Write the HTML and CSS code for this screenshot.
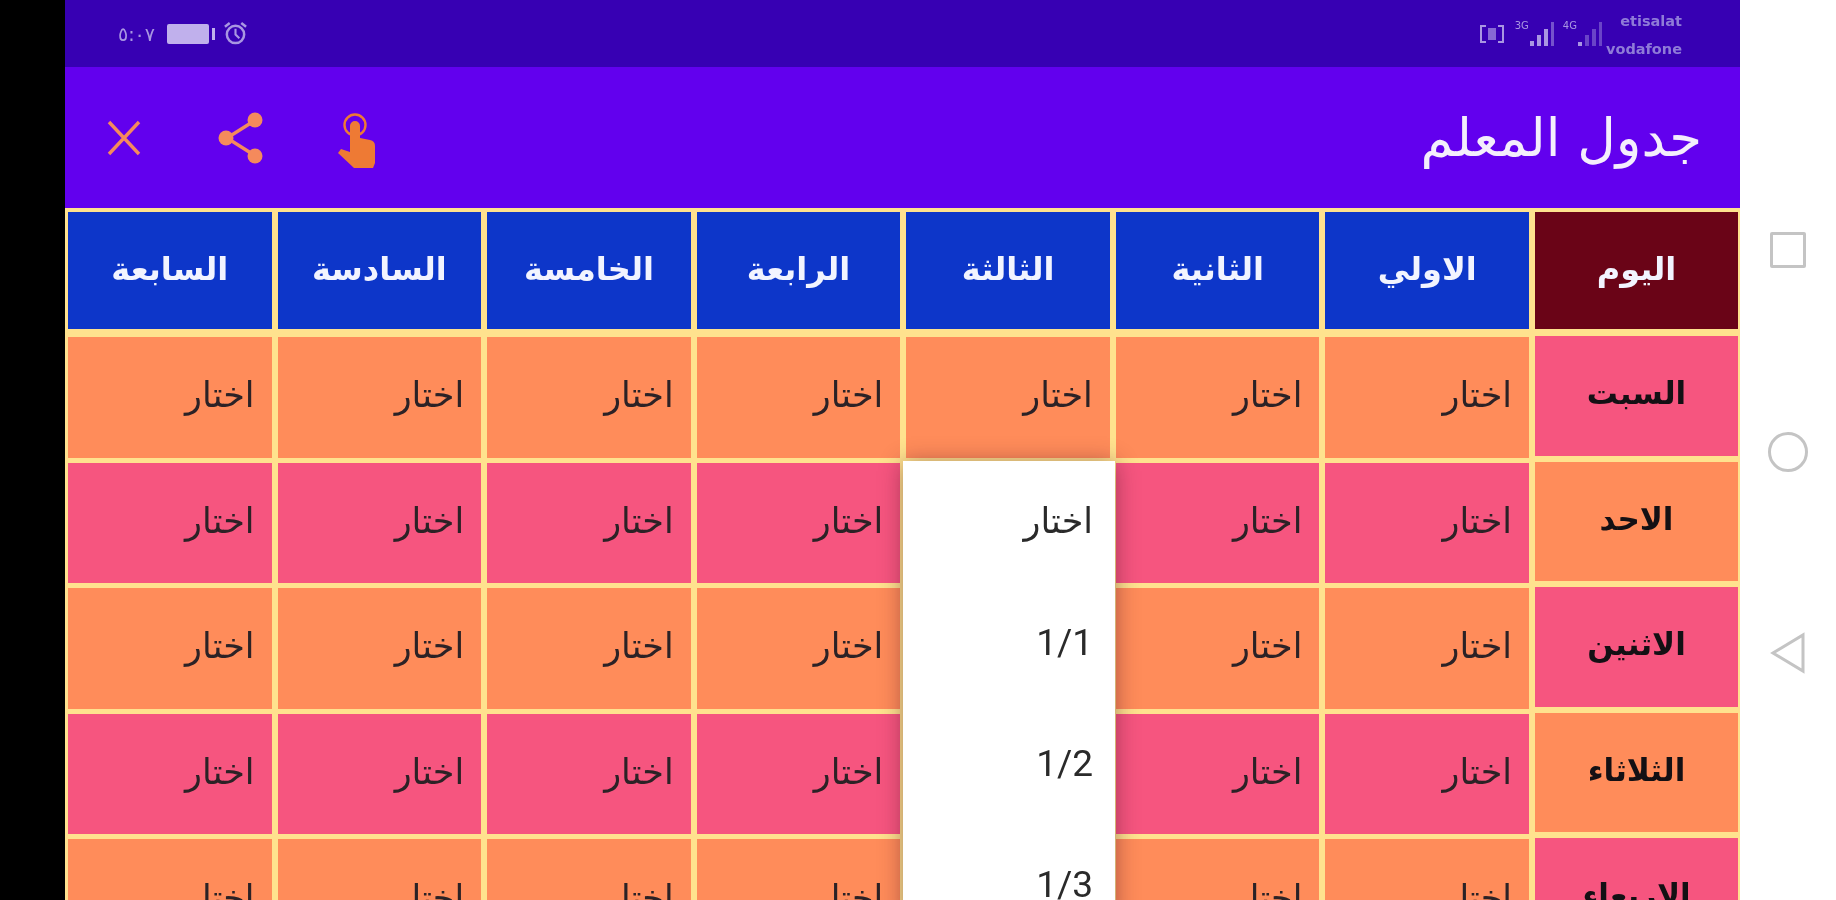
FILE: index.html
```html
<!DOCTYPE html>
<html lang="en">
<head>
  <meta charset="UTF-8" />
  <title>جدول المعلم</title>
  <link rel="stylesheet" href="styles.css">
</head>
<body>

  <div class="edge"></div>

  <div class="app">
    <!-- Status bar -->
    <div class="status">
      <div class="status-left">
        <span class="clock">٥:٠٧</span>
        <span class="battery"><span class="battery-fill"></span><span class="battery-tip"></span></span>
        <svg class="alarm" viewBox="0 0 26 26">
          <circle cx="13" cy="14" r="9" fill="none" stroke="currentColor" stroke-width="2.6"/>
          <path d="M13 8v6l4 4" fill="none" stroke="currentColor" stroke-width="2.2"/>
          <path d="M2 6l5-4M24 6l-5-4" stroke="currentColor" stroke-width="2.6"/>
        </svg>
      </div>
      <div class="status-right">
        <svg class="sim" viewBox="0 0 26 20">
          <path d="M1 1h6v2H3v14h4v2H1zM25 1h-6v2h4v14h-4v2h6z" fill="currentColor"/>
          <rect x="9" y="4" width="8" height="12" fill="currentColor" opacity=".7"/>
        </svg>
        <span class="net">3G</span>
        <svg class="bars" viewBox="0 0 26 26">
          <path d="M1 20h4v5H1zM8 14h4v11H8zM15 8h4v17h-4z" fill="currentColor"/>
          <path d="M22 1h3v24h-3z" fill="currentColor" opacity=".55"/>
        </svg>
        <span class="net net-second">4G</span>
        <svg class="bars" viewBox="0 0 26 26">
          <path d="M1 21h4v4H1z" fill="currentColor"/>
          <path d="M8 14h4v11H8zM15 8h4v17h-4zM22 1h3v24h-3z" fill="currentColor" opacity=".45"/>
        </svg>
        <div class="carriers">
          <span>etisalat</span>
          <span>vodafone</span>
        </div>
      </div>
    </div>

    <!-- Toolbar -->
    <div class="toolbar">
      <div class="actions">
        <svg class="icon-close" viewBox="0 0 34 36">
          <path d="M2 2l30 32M32 2L2 34" stroke="#f58a5c" stroke-width="3.4" fill="none"/>
        </svg>
        <svg class="icon-share" viewBox="0 0 46 52">
          <path d="M36 9L9 26l27 17" stroke="#f58a5c" stroke-width="3.4" fill="none"/>
          <circle cx="37" cy="8" r="7.5" fill="#f58a5c"/>
          <circle cx="8" cy="26" r="7.5" fill="#f58a5c"/>
          <circle cx="37" cy="44" r="7.5" fill="#f58a5c"/>
        </svg>
        <svg class="icon-touch" viewBox="0 0 38 56">
          <circle cx="17" cy="12" r="10.5" fill="none" stroke="#ee7a34" stroke-width="2.4"/>
          <path d="M12 13a5 5 0 0 1 10 0v12l10 2a6 6 0 0 1 5 6v17l-2 5H16L0 40l3-4 9 3z" fill="#ee7a34"/>
        </svg>
      </div>
      <h1 class="title" dir="rtl">جدول المعلم</h1>
    </div>

    <!-- Timetable -->
    <div class="table" dir="rtl">
      <div class="head">
        <div class="cell-head day-head">اليوم</div>
        <div class="cell-head">الاولي</div>
        <div class="cell-head">الثانية</div>
        <div class="cell-head">الثالثة</div>
        <div class="cell-head">الرابعة</div>
        <div class="cell-head">الخامسة</div>
        <div class="cell-head">السادسة</div>
        <div class="cell-head">السابعة</div>
      </div>
      <div class="body">
        <div class="days">
          <div class="day pink">السبت</div>
          <div class="day orange">الاحد</div>
          <div class="day pink">الاثنين</div>
          <div class="day orange">الثلاثاء</div>
          <div class="day pink">الاربعاء</div>
        </div>
        <div class="periods" id="periods"></div>
      </div>

      <div class="popup">
        <div class="popup-item">اختار</div>
        <div class="popup-item">1/1</div>
        <div class="popup-item">1/2</div>
        <div class="popup-item">1/3</div>
      </div>
    </div>
  </div>

  <!-- Android nav buttons -->
  <div class="nav">
    <span class="nav-square"></span>
    <span class="nav-circle"></span>
    <svg class="nav-back" viewBox="0 0 36 42">
      <path d="M33 3v36L3 21z" fill="none" stroke="#c4c4c4" stroke-width="3"/>
    </svg>
  </div>

  <script>
    const periods = document.getElementById("periods");
    let html = "";
    for (let r = 0; r < 5; r++) {
      const color = r % 2 === 0 ? "orange" : "pink";
      for (let c = 0; c < 7; c++) {
        // third period is hidden by the open dropdown below the first row
        const label = r > 0 && c === 2 ? "" : "اختار";
        html += `<div class="slot ${color}">${label}</div>`;
      }
    }
    periods.innerHTML = html;
  </script>

</body>
</html>
```

FILE: styles.css
```css
body {
  margin: 0;
  height: 900px;
  overflow: hidden;
  display: flex;
  background: #fff;
  font-family: "DejaVu Sans", "Noto Sans", sans-serif;
}

.edge {
  width: 65px;
  flex: none;
  background: #000;
}

.app {
  width: 1675px;
  flex: none;
  position: relative;
  overflow: hidden;
  filter: blur(0.7px);
}

.status {
  height: 67px;
  background: #3700b3;
  color: #a996e2;
  display: flex;
  justify-content: space-between;
  align-items: center;
  padding: 0 58px 0 53px;
}

.status-left,
.status-right {
  display: flex;
  align-items: center;
}

.clock {
  font-size: 19px;
  width: 49px;
}

.battery {
  width: 48px;
  height: 22px;
  margin-right: 8px;
  display: flex;
  align-items: center;
  gap: 3px;
}

.battery-fill {
  flex: 1;
  height: 20px;
  background: #c0b0ec;
  border-radius: 2px;
}

.battery-tip {
  width: 3px;
  height: 12px;
  background: #c0b0ec;
}

.alarm {
  width: 25px;
  height: 25px;
}

.sim {
  width: 26px;
  height: 20px;
  margin-right: 10px;
}

.net {
  font-size: 10px;
  align-self: flex-start;
  margin-top: 11px;
}

.net-second {
  margin-left: 5px;
}

.bars {
  width: 26px;
  height: 26px;
  margin-right: 3px;
}

.carriers {
  display: flex;
  flex-direction: column;
  align-items: flex-end;
  gap: 11px;
  font-size: 14.5px;
  line-height: 17px;
  font-weight: bold;
  color: #8f7bd8;
  padding-top: 4px;
}

.toolbar {
  height: 141px;
  background: #6200ee;
  display: flex;
  justify-content: space-between;
  align-items: center;
  padding: 0 38px 0 42px;
}

.actions {
  display: flex;
  align-items: center;
}

.icon-close {
  width: 34px;
  height: 36px;
  margin-right: 77px;
}

.icon-share {
  width: 46px;
  height: 52px;
  margin-right: 74px;
}

.icon-touch {
  width: 38px;
  height: 56px;
  margin-top: 7px;
}

.title {
  margin: 0;
  color: #f4eefc;
  font-size: 53px;
  font-weight: normal;
  line-height: 1;
}

.table {
  background: #ffe28e;
  padding: 4px 2px 0 3px;
  height: 700px;
  box-sizing: border-box;
  position: relative;
}

.head {
  display: grid;
  grid-template-columns: 203px repeat(7, 1fr);
  column-gap: 6px;
  margin-bottom: 7px;
}

.cell-head {
  height: 117px;
  box-sizing: border-box;
  padding-bottom: 4px;
  background: #0d36c9;
  color: #f2f4ff;
  font-size: 32px;
  font-weight: bold;
  display: flex;
  align-items: center;
  justify-content: center;
}

.day-head {
  background: #6a0417;
}

.body {
  display: flex;
  gap: 6px;
}

.days {
  width: 203px;
  flex: none;
  display: flex;
  flex-direction: column;
  gap: 6px;
}

.day {
  height: 119.5px;
  flex: none;
  box-sizing: border-box;
  padding-bottom: 5px;
  color: #141014;
  font-size: 31px;
  font-weight: bold;
  display: flex;
  align-items: center;
  justify-content: center;
}

.periods {
  flex: 1;
  padding-top: 1px;
  display: grid;
  grid-template-columns: repeat(7, 1fr);
  grid-auto-rows: 120.6px;
  gap: 5px 6px;
}

.slot {
  color: #2c2226;
  font-size: 35px;
  display: flex;
  align-items: center;
  padding-right: 17px;
  padding-bottom: 4px;
}

.orange {
  background: #ff8c5a;
}

.pink {
  background: #f6557f;
}

.popup {
  position: absolute;
  left: 838px;
  top: 253px;
  width: 212px;
  height: 460px;
  background: #fff;
  box-shadow: 0 2px 22px rgba(60, 10, 30, 0.45);
  color: #2a2a2a;
  font-size: 37px;
  padding-top: 3px;
  box-sizing: border-box;
}

.popup-item {
  height: 114px;
  margin-bottom: 7px;
  display: flex;
  align-items: center;
  padding-right: 22px;
  font-family: Roboto, "DejaVu Sans", sans-serif;
}

.popup-item:first-child {
  font-size: 35px;
  font-family: "DejaVu Sans", sans-serif;
}

.nav {
  width: 96px;
  flex: none;
  display: flex;
  flex-direction: column;
  align-items: center;
  padding: 232px 0 0;
  box-sizing: border-box;
}

.nav-square {
  width: 36px;
  height: 36px;
  box-sizing: border-box;
  border: 3px solid #c4c4c4;
  border-radius: 2px;
  margin-bottom: 164px;
}

.nav-circle {
  width: 40px;
  height: 40px;
  box-sizing: border-box;
  border: 3px solid #c4c4c4;
  border-radius: 50%;
  margin-bottom: 160px;
}

.nav-back {
  width: 36px;
  height: 42px;
}
```
